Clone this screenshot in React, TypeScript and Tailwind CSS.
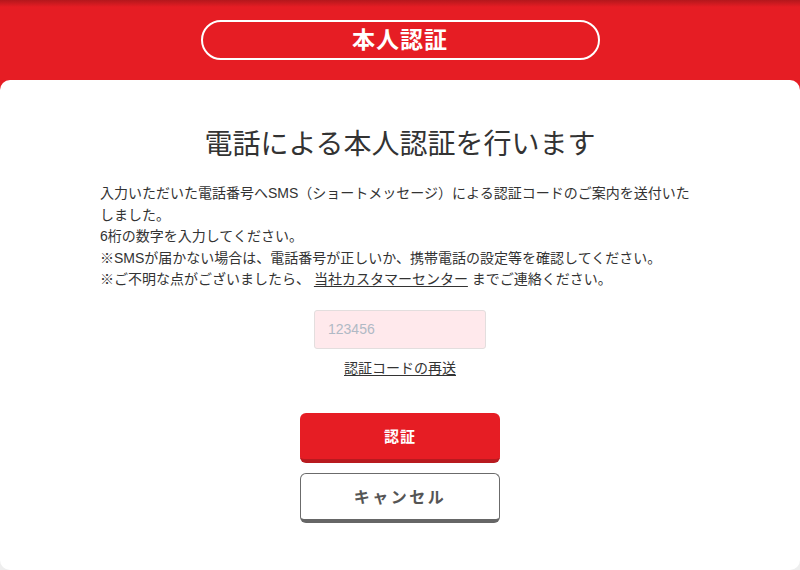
import React from 'react';

const jp = 'font-["Liberation_Sans","Noto_Sans_CJK_JP",sans-serif]';

export default function App() {
  return (
    <div className={`min-h-[570px] bg-[linear-gradient(to_bottom,#e61d24_300px,#eeeeee_300px)] ${jp}`}>
      <header className="h-[80px] bg-[linear-gradient(to_bottom,#b4171c,#e61d24_7px)] pt-[20px] flex justify-center">
        <h1 className="w-[399px] h-[40px] rounded-full border-2 border-white flex items-center justify-center text-white text-[23px] font-bold tracking-[1px]">
          本人認証
        </h1>
      </header>

      <main className="bg-white rounded-[10px] h-[490px] pt-[42px]">
        <h2 className="text-center text-[28px] leading-[40px] text-[#333] font-['Noto_Sans_CJK_JP',sans-serif]">
          電話による本人認証を行います
        </h2>

        <div className="w-[600px] mx-auto mt-[21px] text-[14px] leading-[21.5px] text-[#333]">
          <p>入力いただいた電話番号へSMS（ショートメッセージ）による認証コードのご案内を送付いたしました。</p>
          <p>6桁の数字を入力してください。</p>
          <p>※SMSが届かない場合は、電話番号が正しいか、携帯電話の設定等を確認してください。</p>
          <p>
            ※ご不明な点がございましたら、 <a href="#" className="underline underline-offset-2">当社カスタマーセンター</a> までご連絡ください。
          </p>
        </div>

        <div className="flex flex-col items-center mt-[19px]">
          <input
            type="text"
            placeholder="123456"
            className="w-[172px] h-[39px] bg-[#ffe9ec] border border-[#e3dede] rounded-[3px] pl-[13px] text-[14px] placeholder:text-[#b0b9c5] outline-none"
          />
          <a href="#" className="mt-[9px] text-[14px] leading-[20px] text-[#333] underline underline-offset-2">
            認証コードの再送
          </a>

          <button className="mt-[35px] w-[200px] h-[50px] rounded-[6px] bg-[#e61d24] border-b-[4px] border-[#b81a1f] pt-[3px] text-white text-[15px] font-bold tracking-[1px]">
            認証
          </button>
          <button className="mt-[10px] w-[200px] h-[50px] rounded-[6px] bg-white border border-[#6b6b6b] border-b-[4px] border-b-[#666] pt-[3px] text-[#555] text-[16px] font-bold tracking-[2.5px]">
            キャンセル
          </button>
        </div>
      </main>
    </div>
  );
}
